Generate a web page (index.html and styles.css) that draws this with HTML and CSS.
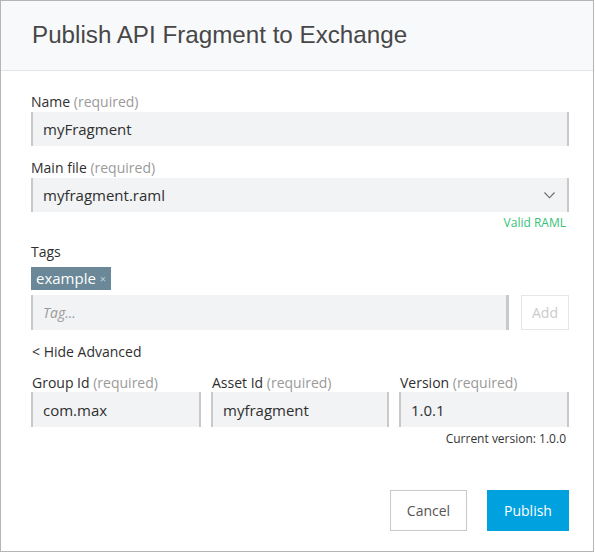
FILE: index.html
```html
<!DOCTYPE html>
<html>
<head>
<meta charset="utf-8">
<link rel="stylesheet" href="styles.css">
</head>
<body>
<div class="dialog">
  <div class="header">
    <h1 class="title">Publish API Fragment to Exchange</h1>
  </div>
  <div class="body">
    <div class="field">
      <label class="label">Name <span class="req">(required)</span></label>
      <div class="input">myFragment</div>
    </div>
    <div class="field">
      <label class="label">Main file <span class="req">(required)</span></label>
      <div class="input select">
        <span>myfragment.raml</span>
        <svg class="chev" width="11" height="7" viewBox="0 0 11 7"><path d="M0.5 0.5 L5.5 5.8 L10.5 0.5" fill="none" stroke="#666" stroke-width="1.1"/></svg>
      </div>
      <div class="hint valid">Valid RAML</div>
    </div>
    <div class="field tags">
      <label class="label">Tags</label>
      <div class="chips"><span class="chip">example <span class="x">×</span></span></div>
      <div class="tagrow">
        <div class="input placeholder">Tag...</div>
        <button class="add">Add</button>
      </div>
    </div>
    <div class="toggle">&lt; Hide Advanced</div>
    <div class="cols">
      <div class="col">
        <label class="label">Group Id <span class="req">(required)</span></label>
        <div class="input">com.max</div>
      </div>
      <div class="col">
        <label class="label">Asset Id <span class="req">(required)</span></label>
        <div class="input">myfragment</div>
      </div>
      <div class="col">
        <label class="label">Version <span class="req">(required)</span></label>
        <div class="input">1.0.1</div>
        <div class="hint current">Current version: 1.0.0</div>
      </div>
    </div>
    <div class="actions">
      <button class="btn cancel">Cancel</button>
      <button class="btn publish">Publish</button>
    </div>
  </div>
</div>
</body>
</html>
```
FILE: styles.css
```css
* { box-sizing: border-box; }
html, body { margin: 0; padding: 0; background: #fff; }
body { font-family: "Open Sans", "DejaVu Sans", sans-serif; color: #333; }

.dialog {
  width: 594px;
  height: 552px;
  border: 1px solid #b5b5b5;
  background: #fff;
  display: flex;
  flex-direction: column;
}
.header {
  height: 70px;
  background: #f8f9fb;
  border-bottom: 1px solid #e3e4e6;
  padding: 0 0 0 31px;
  display: flex;
  align-items: center;
}
.title {
  margin: 0;
  font-family: "Liberation Sans", Arial, sans-serif;
  font-weight: normal;
  font-size: 24.2px;
  color: #474747;
  position: relative;
  top: -1px;
}
.body {
  padding: 21px 24px 0 30px;
  display: flex;
  flex-direction: column;
}
.field { display: flex; flex-direction: column; margin-bottom: 12px; }
.label {
  font-size: 14px;
  line-height: 20px;
  color: #2f2f2f;
}
.req { color: #9a9a9a; }
.input {
  height: 34px;
  background: #f2f3f5;
  border-left: 2px solid #c9c9c9;
  border-right: 2px solid #c9c9c9;
  padding: 0 10px;
  font-size: 15px;
  color: #2f2f2f;
  display: flex;
  align-items: center;
}
.select { justify-content: space-between; padding-right: 12px; }
.chev { margin-top: 1px; }
.hint {
  font-size: 12px;
  line-height: 14px;
  text-align: right;
  padding-right: 3px;
  margin-top: 4px;
}
.valid { color: #34c27a; }
.field.tags { margin-bottom: 12px; }
.chips { margin-top: 5px; margin-bottom: 5px; display: flex; }
.chip {
  background: #6a8897;
  color: #fff;
  font-size: 15px;
  height: 23px;
  line-height: 23px;
  padding: 0 5px 0 5px;
}
.chip .x { font-size: 11px; color: #c5d2d9; position: relative; top: -1px; }
.tagrow { display: flex; gap: 12px; }
.tagrow .input { flex: 1; height: 35px; border-right-width: 3px; }
.placeholder { font-style: italic; color: #9a9a9a; font-size: 14px; }
.add {
  width: 48px;
  height: 35px;
  background: #fff;
  border: 1px solid #e6e6e6;
  color: #cbcbcb;
  font-family: "Open Sans", sans-serif;
  font-size: 14px;
  padding: 0;
}
.toggle {
  font-size: 14px;
  line-height: 20px;
  color: #2f2f2f;
  margin-left: 1px;
}
.cols {
  display: grid;
  grid-template-columns: 170px 178px 170px;
  gap: 10px;
  margin-top: 11px;
}
.col { display: flex; flex-direction: column; }
.col .label { margin-bottom: -1px; margin-left: 1px; }
.col .input { height: 35px; }
.current { color: #333; margin-top: 5px; }
.actions {
  display: flex;
  justify-content: flex-end;
  gap: 20px;
  margin-top: 44px;
}
.btn {
  height: 41px;
  font-family: "Open Sans", sans-serif;
  font-size: 14px;
  padding: 0;
}
.cancel {
  width: 77px;
  background: #fff;
  border: 1px solid #c9c9c9;
  color: #555;
}
.publish {
  width: 82px;
  background: #00a1df;
  border: none;
  color: #fff;
}
```
